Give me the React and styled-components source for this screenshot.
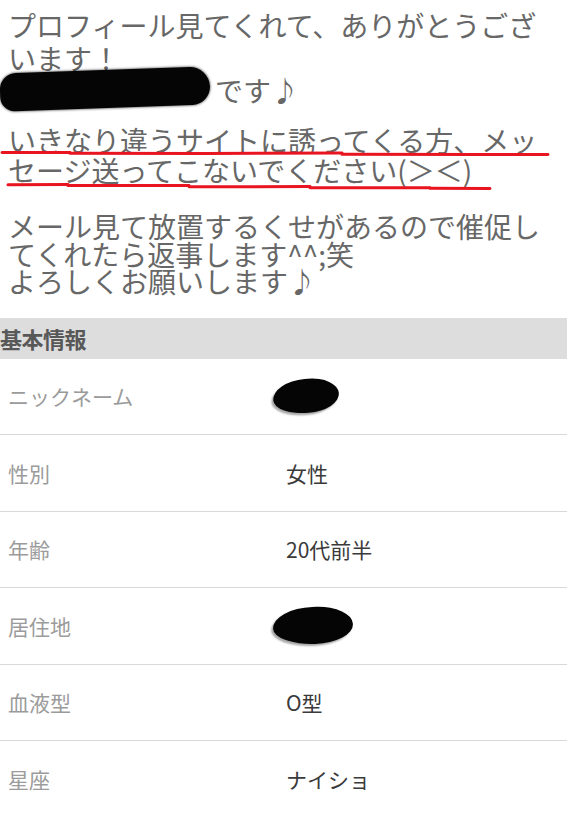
import React from 'react';
import styled, { createGlobalStyle } from 'styled-components';

const GlobalStyle = createGlobalStyle`
  html, body {
    margin: 0;
    padding: 0;
    background: #fff;
  }

  body {
    font-family: "Noto Sans CJK JP", "Noto Sans", sans-serif;
    -webkit-font-smoothing: antialiased;
  }
`;

const Page = styled.div`
  width: 567px;
  overflow: hidden;
`;

const Message = styled.section`
  position: relative;
  padding: 9px 8px 0;
  color: #676767;
  font-size: 28px;
`;

const Paragraph = styled.p`
  margin: ${({ $mt }) => $mt}px 0 0;
  line-height: ${({ $lh }) => $lh}px;
`;

const Line = styled.span`
  position: relative;
  display: block;
  padding-left: ${({ $indent }) => $indent || 0}px;
`;

const NameBlot = styled.span`
  position: absolute;
  left: -8px;
  top: -4px;
  width: 210px;
  height: 38px;
  background: #050505;
  border-radius: 18px 22px 20px 16px;
  transform: rotate(-2deg);
  box-shadow: 0 0 2px 1px rgba(0, 0, 0, 0.4);
`;

const Scribble = styled.svg`
  position: absolute;
  left: 0;
  top: 0;
  pointer-events: none;
`;

const SectionHeader = styled.h2`
  margin: 22px 0 0;
  height: 41px;
  display: flex;
  align-items: center;
  padding: 0;
  background: #dddddd;
  color: #585858;
  font-size: 22px;
  font-weight: 700;
  letter-spacing: -0.5px;
`;

const InfoList = styled.dl`
  margin: 0;
`;

const InfoRow = styled.div`
  display: grid;
  grid-template-columns: 278px 1fr;
  align-items: center;
  height: 76.5px;
  padding-left: 8px;
  border-bottom: 1px solid #d9d9d9;
  box-sizing: border-box;
  font-size: 21px;

  &:last-child {
    border-bottom: none;
  }
`;

const Label = styled.dt`
  color: #9b9b9b;
`;

const Value = styled.dd`
  margin: 0;
  display: flex;
  align-items: center;
  color: #3a3a3a;
`;

const Blot = styled.span`
  display: inline-block;
  width: ${({ $w }) => $w}px;
  height: ${({ $h }) => $h}px;
  margin-left: -13px;
  background: #050505;
  border-radius: 50% 45% 48% 52% / 55% 50% 50% 45%;
  transform: rotate(${({ $rot }) => $rot}deg);
  box-shadow: -2px 2px 2px 0 rgba(0, 0, 0, 0.35);
`;

const profile = [
  { label: 'ニックネーム', blot: { w: 66, h: 34, rot: -5 } },
  { label: '性別', value: '女性' },
  { label: '年齢', value: '20代前半' },
  { label: '居住地', blot: { w: 80, h: 37, rot: -2 } },
  { label: '血液型', value: 'O型' },
  { label: '星座', value: 'ナイショ' },
];

// hand-drawn red underline strokes, in page coordinates
const strokes = [
  'M2 152.6 L70 152.4',
  'M70 153.2 L206 153.4',
  'M206 153.4 L342 153',
  'M342 154.3 L478 154.4',
  'M478 154.4 L548 154.6',
  'M8 184.7 L68 184.6',
  'M68 185.6 L189 185.5',
  'M189 186.8 L310 186.6',
  'M310 187.8 L430 187.8',
  'M430 188.3 L490 188.5',
];

const App = () => (
  <Page>
    <GlobalStyle />
    <Message>
      <Paragraph $mt={0} $lh={32.5}>
        <Line>プロフィール見てくれて、ありがとうございます！</Line>
        <Line $indent={207}>
          <NameBlot />
          です♪
        </Line>
      </Paragraph>
      <Paragraph $mt={18.5} $lh={30}>
        いきなり違うサイトに誘ってくる方、メッセージ送ってこないでください(＞＜)
      </Paragraph>
      <Paragraph $mt={28} $lh={27.5}>
        メール見て放置するくせがあるので催促してくれたら返事します^^;笑
        <br />
        よろしくお願いします♪
      </Paragraph>
      <Scribble width="567" height="200" viewBox="0 0 567 200">
        {strokes.map((d, i) => (
          <path key={i} d={d} stroke="#e8141f" strokeWidth="3" strokeLinecap="round" fill="none" />
        ))}
      </Scribble>
    </Message>

    <SectionHeader>基本情報</SectionHeader>
    <InfoList>
      {profile.map(({ label, value, blot }) => (
        <InfoRow key={label}>
          <Label>{label}</Label>
          <Value>{blot ? <Blot $w={blot.w} $h={blot.h} $rot={blot.rot} /> : value}</Value>
        </InfoRow>
      ))}
    </InfoList>
  </Page>
);

export default App;
